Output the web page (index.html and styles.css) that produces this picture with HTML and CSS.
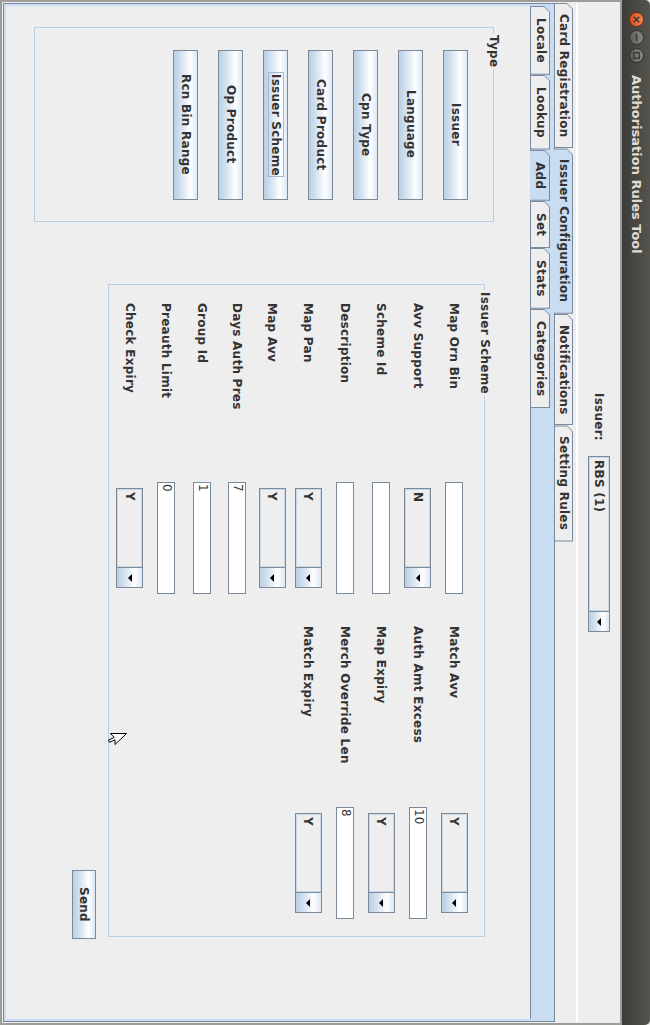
FILE: index.html
```html
<!DOCTYPE html>
<html lang="en">
<head>
<meta charset="utf-8">
<title>Authorisation Rules Tool</title>
<link rel="stylesheet" href="styles.css">
</head>
<body>
<div class="screen">
  <div class="window">
    <header class="titlebar">
      <div class="wm-buttons">
        <svg class="wm" viewBox="0 0 15 15"><defs><linearGradient id="gclose" x1="1" y1="0" x2="0" y2="0"><stop offset="0" stop-color="#f6875a"/><stop offset="1" stop-color="#db4b15"/></linearGradient><linearGradient id="gmin" x1="1" y1="0" x2="0" y2="0"><stop offset="0" stop-color="#8a8984"/><stop offset="1" stop-color="#5c5a55"/></linearGradient></defs><circle cx="7.5" cy="7.5" r="7" fill="url(#gclose)" stroke="#6e2c12" stroke-width="1"/><path d="M5.2 5.2l4.6 4.6M9.8 5.2l-4.6 4.6" stroke="#3c3b37" stroke-width="1.6" stroke-linecap="round"/></svg>
        <svg class="wm" viewBox="0 0 15 15"><circle cx="7.5" cy="7.5" r="7" fill="url(#gmin)" stroke="#2e2d2a" stroke-width="1"/><path d="M7.5 4.6v5.8" stroke="#3c3b37" stroke-width="1.6" stroke-linecap="round"/></svg>
        <svg class="wm" viewBox="0 0 15 15"><circle cx="7.5" cy="7.5" r="7" fill="url(#gmin)" stroke="#2e2d2a" stroke-width="1"/><rect x="4.7" y="4.7" width="5.6" height="5.6" fill="none" stroke="#3c3b37" stroke-width="1.4"/></svg>
      </div>
      <div class="title">Authorisation Rules Tool</div>
    </header>

    <main class="frame">
      <div class="issuer-row">
        <span class="issuer-label">Issuer:</span>
        <div class="combo combo-issuer"><span class="combo-value">RBS (1)</span><span class="combo-arrow"></span></div>
      </div>

      <nav class="tabstrip outer-strip">
        <div class="tab">Card Registration</div>
        <div class="tab is-selected">Issuer Configuration</div>
        <div class="tab">Notifications</div>
        <div class="tab">Setting Rules</div>
      </nav>

      <div class="outer-content">
        <nav class="tabstrip inner-strip">
          <div class="tab">Locale</div>
          <div class="tab">Lookup</div>
          <div class="tab is-selected">Add</div>
          <div class="tab">Set</div>
          <div class="tab">Stats</div>
          <div class="tab">Categories</div>
        </nav>

        <div class="inner-content">
          <section class="group type-group">
            <span class="group-title">Type</span>
            <div class="btn type-btn" role="button">Issuer</div>
            <div class="btn type-btn" role="button">Language</div>
            <div class="btn type-btn" role="button">Cpn Type</div>
            <div class="btn type-btn" role="button">Card Product</div>
            <div class="btn type-btn" role="button"><span class="focus-ring">Issuer Scheme</span></div>
            <div class="btn type-btn" role="button">Op Product</div>
            <div class="btn type-btn" role="button">Rcn Bin Range</div>
          </section>

          <div class="scheme-area">
            <section class="group scheme-group">
              <span class="group-title">Issuer Scheme</span>
              <div class="form-grid">
                <span class="lbl">Map Orn Bin</span>
                <div class="fld text-field"></div>
                <span class="lbl r">Match Avv</span>
                <div class="fld r combo"><span class="combo-value">Y</span><span class="combo-arrow"></span></div>

                <span class="lbl">Avv Support</span>
                <div class="fld combo"><span class="combo-value">N</span><span class="combo-arrow"></span></div>
                <span class="lbl r">Auth Amt Excess</span>
                <div class="fld r text-field">10</div>

                <span class="lbl">Scheme Id</span>
                <div class="fld text-field"></div>
                <span class="lbl r">Map Expiry</span>
                <div class="fld r combo"><span class="combo-value">Y</span><span class="combo-arrow"></span></div>

                <span class="lbl">Description</span>
                <div class="fld text-field"></div>
                <span class="lbl r">Merch Override Len</span>
                <div class="fld r text-field">8</div>

                <span class="lbl">Map Pan</span>
                <div class="fld combo"><span class="combo-value">Y</span><span class="combo-arrow"></span></div>
                <span class="lbl r">Match Expiry</span>
                <div class="fld r combo"><span class="combo-value">Y</span><span class="combo-arrow"></span></div>

                <span class="lbl">Map Avv</span>
                <div class="fld combo"><span class="combo-value">Y</span><span class="combo-arrow"></span></div>

                <span class="lbl">Days Auth Pres</span>
                <div class="fld text-field">7</div>

                <span class="lbl">Group Id</span>
                <div class="fld text-field">1</div>

                <span class="lbl">Preauth Limit</span>
                <div class="fld text-field">0</div>

                <span class="lbl">Check Expiry</span>
                <div class="fld combo"><span class="combo-value">Y</span><span class="combo-arrow"></span></div>
              </div>
            </section>
            <div class="btn send" role="button">Send</div>
          </div>
        </div>
      </div>
    </main>
  </div>

  <svg class="cursor" width="19" height="12" viewBox="0 0 19 12"><path d="M18.5 0.5H2.5L6.2 4.5L0.5 7L1.5 9.3L7 6.8V11.5Z" fill="#fff" stroke="#000" stroke-width="1" stroke-linejoin="round"/></svg>
</div>
</body>
</html>
```

FILE: styles.css
```css
html, body {
  margin: 0;
  padding: 0;
  width: 650px;
  height: 1025px;
  overflow: hidden;
  background: #ffffff;
}

/* The captured screen is turned a quarter clockwise: lay it out in a
   vertical writing mode so rows run top-to-bottom and blocks right-to-left. */
.screen {
  position: relative;
  writing-mode: vertical-rl;
  width: 650px;
  height: 1025px;
  font-family: "DejaVu Sans", sans-serif;
  font-size: 12px;
  font-weight: bold;
  line-height: 14px;
  letter-spacing: 0.25px;
  color: #333333;
}

.window {
  display: flex;
  flex-direction: column;
  inline-size: 1025px;
  block-size: 650px;
  background: #eeeeee;
}

/* ---------- title bar ---------- */
.titlebar {
  flex: none;
  block-size: 28px;
  display: flex;
  align-items: center;
  padding-inline-start: 12px;
  background: linear-gradient(to left, #56544e, #3c3b37);
  border-start-start-radius: 5px;
  border-start-end-radius: 5px;
}
.wm-buttons {
  display: flex;
  gap: 3px;
}
.wm {
  display: block;
  width: 15px;
  height: 15px;
}
.title {
  margin-inline-start: 12px;
  color: #dfdbd2;
  font-size: 13px;
  letter-spacing: 0;
}

/* ---------- window body ---------- */
.frame {
  flex: 1;
  min-block-size: 0;
  display: flex;
  flex-direction: column;
  border: 2px solid #9e9d99;
  padding-block: 0 1px;
  padding-inline: 1px;
}

.issuer-row {
  flex: none;
  block-size: 42px;
  display: flex;
  align-items: center;
  justify-content: center;
  gap: 16px;
  border-block-end: 2px solid #ffffff;
}

/* ---------- tabs ---------- */
.tabstrip {
  flex: none;
  display: flex;
  align-items: flex-end;
}
.outer-strip { block-size: 21px; }
.inner-strip { block-size: 23px; }

.tab {
  position: relative;
  z-index: 0;
  display: flex;
  align-items: center;
  padding-inline: 12px;
  white-space: nowrap;
}
.outer-strip .tab {
  block-size: 18px;
  padding-inline: 11px;
}
.inner-strip .tab { block-size: 19px; }

.tab::before,
.tab::after {
  content: "";
  position: absolute;
  z-index: -1;
}
.tab::before {
  inset: 0;
  background: #7a8a9e;
  clip-path: polygon(0 0, calc(100% - 6px) 0, 100% 6px, 100% 100%, 0 100%);
}
.tab::after {
  inset-block: 1px 0;
  inset-inline: 1px;
  background: #eeeeee;
  clip-path: polygon(0 0, calc(100% - 5px) 0, 100% 5px, 100% 100%, 0 100%);
}
.tab.is-selected {
  z-index: 1;
  margin-block-end: -1px;
}
.outer-strip .tab.is-selected { block-size: 19px; }
.inner-strip .tab.is-selected { block-size: 20px; }
.tab.is-selected::after { background: #c8ddf2; }

.outer-content {
  flex: 1;
  min-block-size: 0;
  display: flex;
  flex-direction: column;
  border: 1px solid #7a8a9e;
  background: #c8ddf2;
  padding-block: 0 2px;
  padding-inline: 2px;
}

.inner-content {
  flex: 1;
  display: flex;
  align-items: flex-start;
  background: #eeeeee;
  border-block-start: 1px solid #7a8a9e;
}

/* ---------- titled groups ---------- */
.group {
  position: relative;
  box-sizing: border-box;
  border: 1px solid #b8cfe5;
}
.group-title {
  position: absolute;
  inset-block-start: -8px;
  inset-inline-start: 5px;
  padding-inline: 2px;
  background: #eeeeee;
  line-height: 14px;
}

.type-group {
  inline-size: 195px;
  block-size: 460px;
  margin-block-start: 36px;
  margin-inline-start: 21px;
  padding-block-start: 25px;
  display: flex;
  flex-direction: column;
  align-items: center;
  gap: 20px;
}

.scheme-area {
  margin-block-start: 45px;
  margin-inline-start: 62px;
  display: flex;
  flex-direction: column;
  align-items: flex-end;
}
.scheme-group {
  inline-size: 653px;
  block-size: 377px;
  padding-block-start: 12px;
  padding-inline-start: 18px;
}

/* ---------- buttons ---------- */
.btn {
  box-sizing: border-box;
  display: flex;
  align-items: center;
  justify-content: center;
  border: 1px solid #7a8a99;
  background: linear-gradient(to left, #dde8f3 0%, #ffffff 30%, #dde8f3 60%, #b8cfe5 100%);
  color: #333333;
  cursor: default;
}
.type-btn {
  inline-size: 150px;
  block-size: 25px;
}
.focus-ring {
  border: 1px solid #a3b8cc;
  padding-inline: 1px;
  line-height: 14px;
}
.send {
  inline-size: 69px;
  block-size: 24px;
  margin-block-start: 12px;
  margin-inline-end: -2px;
}

/* ---------- form ---------- */
.form-grid {
  display: grid;
  grid-template-columns: 178px 114px 31px 180px 114px;
  grid-template-rows: 36px 37px 36px 37px 36px 36px 35px 35px 36px 37px;
  align-items: center;
}
.lbl { grid-column: 1; white-space: nowrap; }
.lbl.r { grid-column: 4; }
.fld { grid-column: 2; justify-self: center; }
.fld.r { grid-column: 5; }

.text-field {
  box-sizing: border-box;
  inline-size: 112px;
  block-size: 18px;
  border: 1px solid #7a8a99;
  background: #ffffff;
  padding-inline-start: 1px;
  font-weight: normal;
  letter-spacing: 0;
  line-height: 15px;
}

.combo {
  box-sizing: border-box;
  display: flex;
  inline-size: 100px;
  block-size: 27px;
  border: 1px solid #7a8a99;
  background: #eeeeee;
}
.combo-issuer {
  inline-size: 176px;
  block-size: 22px;
}
.combo-value {
  flex: 1;
  display: flex;
  align-items: center;
  padding-inline-start: 2px;
  border: 1px solid #c6d7e8;
}
.combo-arrow {
  inline-size: 19px;
  flex: none;
  display: flex;
  align-items: center;
  justify-content: center;
  border-inline-start: 1px solid #7a8a99;
  background: linear-gradient(to left, #dde8f3 0%, #ffffff 30%, #dde8f3 60%, #b8cfe5 100%);
}
.combo-arrow::before {
  content: "";
  border-inline: 4px solid transparent;
  border-block-start: 4px solid #000000;
}

/* ---------- mouse pointer (over the form) ---------- */
.cursor {
  position: absolute;
  left: 108px;
  top: 733px;
}
```
